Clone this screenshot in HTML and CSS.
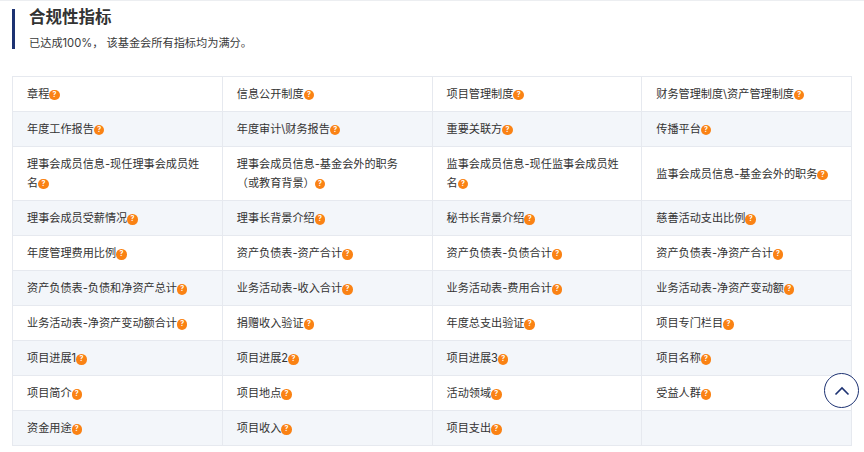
FILE: index.html
```html
<!DOCTYPE html>
<html lang="zh-CN">
<head>
<meta charset="utf-8">
<title>合规性指标</title>
<link rel="stylesheet" href="styles.css">
</head>
<body>
<main class="page">
  <header class="head">
    <h1>合规性指标</h1>
    <p>已达成100%， 该基金会所有指标均为满分。</p>
  </header>
  <table class="grid">
    <colgroup><col class="c1"><col class="c2"><col class="c3"><col class="c4"></colgroup>
    <tbody>
      <tr class="r"><td>章程<i>?</i></td><td>信息公开制度<i>?</i></td><td>项目管理制度<i>?</i></td><td>财务管理制度\资产管理制度<i>?</i></td></tr>
      <tr class="r alt"><td>年度工作报告<i>?</i></td><td>年度审计\财务报告<i>?</i></td><td>重要关联方<i>?</i></td><td>传播平台<i>?</i></td></tr>
      <tr class="r tall"><td>理事会成员信息-现任理事会成员姓名<i>?</i></td><td>理事会成员信息-基金会外的职务（或教育背景）<i>?</i></td><td>监事会成员信息-现任监事会成员姓名<i>?</i></td><td>监事会成员信息-基金会外的职务<i>?</i></td></tr>
      <tr class="r alt"><td>理事会成员受薪情况<i>?</i></td><td>理事长背景介绍<i>?</i></td><td>秘书长背景介绍<i>?</i></td><td>慈善活动支出比例<i>?</i></td></tr>
      <tr class="r"><td>年度管理费用比例<i>?</i></td><td>资产负债表-资产合计<i>?</i></td><td>资产负债表-负债合计<i>?</i></td><td>资产负债表-净资产合计<i>?</i></td></tr>
      <tr class="r alt"><td>资产负债表-负债和净资产总计<i>?</i></td><td>业务活动表-收入合计<i>?</i></td><td>业务活动表-费用合计<i>?</i></td><td>业务活动表-净资产变动额<i>?</i></td></tr>
      <tr class="r"><td>业务活动表-净资产变动额合计<i>?</i></td><td>捐赠收入验证<i>?</i></td><td>年度总支出验证<i>?</i></td><td>项目专门栏目<i>?</i></td></tr>
      <tr class="r alt"><td>项目进展1<i>?</i></td><td>项目进展2<i>?</i></td><td>项目进展3<i>?</i></td><td>项目名称<i>?</i></td></tr>
      <tr class="r"><td>项目简介<i>?</i></td><td>项目地点<i>?</i></td><td>活动领域<i>?</i></td><td>受益人群<i>?</i></td></tr>
      <tr class="r alt"><td>资金用途<i>?</i></td><td>项目收入<i>?</i></td><td>项目支出<i>?</i></td><td></td></tr>
    </tbody>
  </table>
  <button class="top" type="button" aria-label="返回顶部">
    <svg viewBox="0 0 16 10" width="16" height="10"><path d="M1.500 8.500 8 2l6.500 6.500" fill="none" stroke="#1d3272" stroke-width="1.600"/></svg>
  </button>
</main>
</body>
</html>
```
FILE: styles.css
```css
html, body { margin: 0; padding: 0; background: #fff; }
body { width: 864px; height: 452px; overflow: hidden; font-family: Inter, "Noto Sans CJK SC", "Noto Sans", sans-serif; color: #333; }
.page { position: relative; height: 452px; box-sizing: border-box; border-top: 1.500px solid #eceef1; padding: 7.500px 12px 0 12px; }
.head { border-left: 3px solid #1d3272; padding-left: 14px; height: 40px; margin-bottom: 27px; box-sizing: border-box; }
.head h1 { margin: 0; font-size: 16.500px; line-height: 17px; font-weight: 700; color: #333; }
.head p { margin: 10px 0 0; font-size: 11.200px; line-height: 14px; color: #3a3a3a; }
.grid { border-collapse: collapse; table-layout: fixed; width: 840px; font-size: 11.150px; line-height: 18.500px; color: #333; }
.c1, .c2, .c3, .c4 { width: 25%; }
.grid td { border: 1px solid #e6e9ef; padding: 1px 14px 0 14px; vertical-align: middle; }
.r { height: 35px; }
.tall { height: 54.500px; }
.alt { background: #f3f6fa; }
.grid i { display: inline-block; width: 10.500px; height: 10.500px; border-radius: 50%; background: #fa8214; color: #fff; font-style: normal; font-weight: 700; font-size: 7px; line-height: 10.500px; text-align: center; vertical-align: 1px; margin-top: -3px; }
.top { position: absolute; left: 824px; top: 372px; width: 35px; height: 35px; padding: 0; border: 1.800px solid #1d3272; border-radius: 50%; background: #fff; display: flex; align-items: center; justify-content: center; }
```
